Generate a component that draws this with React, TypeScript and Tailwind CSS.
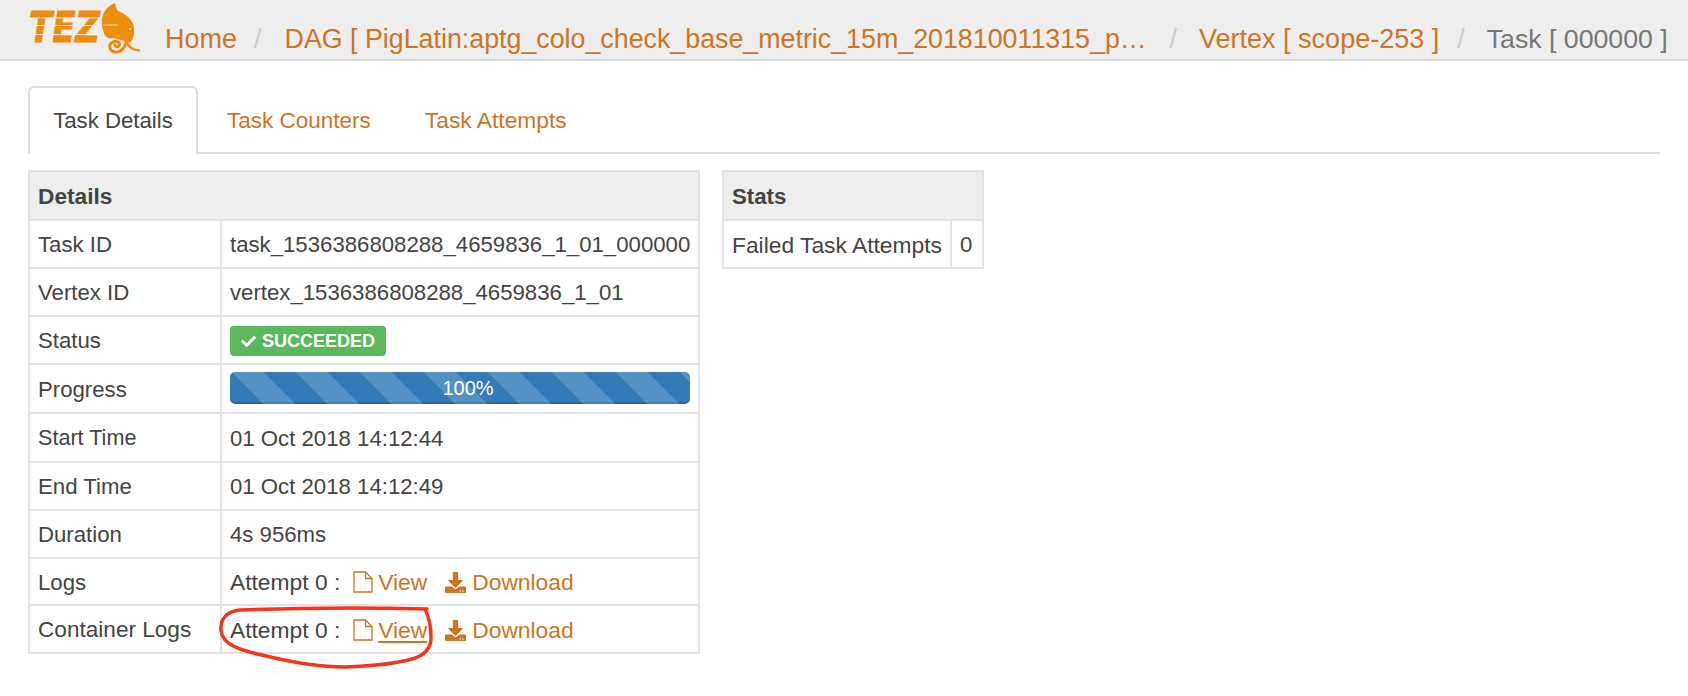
import type { ReactNode } from "react";
import { FaCheck, FaDownload } from "react-icons/fa";

function Logo() {
  return (
    <svg width="115" height="56" viewBox="0 0 115 56" className="shrink-0" aria-hidden="true">
      <text
        x="1"
        y="42"
        textLength="71"
        lengthAdjust="spacingAndGlyphs"
        fontFamily="'DejaVu Sans', sans-serif"
        fontWeight="700"
        fontStyle="italic"
        fontSize="43"
        fill="#ee8c0e"
        stroke="#ee8c0e"
        strokeWidth="1"
      >
        TEZ
      </text>
      <path d="M0 18H72M0 25.5H72M0 34.5H72" stroke="#eeeeee" strokeWidth="0.9" />
      <path
        d="M87 3C88 7 88 9 90 11C96 13 103 18 105.5 25C107 32 106 38 102 43L97 41L85 38C80 39 77 37 76 33C74 28 73 22 74.5 17C76 10 81 5 87 3Z"
        fill="#ee8c0e"
      />
      <path
        d="M98 40C98 48 92 53 87 52C81 51 80 44 85 42C89 40 93 43 91 46C89 47.5 87 46.5 87 45"
        fill="none"
        stroke="#ee8c0e"
        strokeWidth="3"
        strokeLinecap="round"
      />
      <path d="M99 43C101 47 105 50 111 50.5" fill="none" stroke="#ee8c0e" strokeWidth="2.4" strokeLinecap="round" />
      <path d="M75 25H90" stroke="#eeeeee" strokeWidth="0.8" />
      <circle cx="102" cy="29" r="0.9" fill="#eeeeee" />
    </svg>
  );
}

function FileIcon() {
  return (
    <svg width="20" height="22" viewBox="0 0 20 22" className="inline-block align-[-3px]" aria-hidden="true">
      <path d="M1 1H12.5L19 7.5V21H1ZM12.5 1V7.5H19" fill="none" stroke="currentColor" strokeWidth="1.3" />
    </svg>
  );
}

function LogLinks({ active }: { active?: boolean }) {
  return (
    <span className="text-[22.8px]">
      Attempt 0 :
      <span className="ml-[13px] text-[#d0741f]">
        <FileIcon />
        <span className={active ? "pl-[5px] underline decoration-2 underline-offset-[3px]" : "pl-[5px]"}>View</span>
      </span>
      <span className="ml-[18px] text-[#d0741f]">
        <FaDownload className="mr-[6px] inline-block size-[21px] align-[-3px]" />
        Download
      </span>
    </span>
  );
}

const rows: { label: string; labelClass?: string; h: string; value: ReactNode }[] = [
  { label: "Task ID", h: "h-[48px]", value: "task_1536386808288_4659836_1_01_000000" },
  { label: "Vertex ID", h: "h-[48px]", value: "vertex_1536386808288_4659836_1_01" },
  {
    label: "Status",
    h: "h-[48px]",
    value: (
      <span className="flex h-[30px] w-[156px] items-center gap-[6px] rounded-[4px] bg-[#5cb85c] pl-[11px] text-[18px] font-bold text-white">
        <FaCheck className="size-[15px]" />
        SUCCEEDED
      </span>
    ),
  },
  {
    label: "Progress",
    h: "h-[49px]",
    value: (
      <div className="-mt-[3px] flex h-[32px] w-[460px] items-center justify-center overflow-hidden rounded-[5px] bg-[#337ab7] bg-[repeating-linear-gradient(45deg,transparent_1.4px,transparent_24px,#5590c3_24px,#5590c3_46.65px)] pl-[16px] text-[20px] font-medium text-white shadow-[inset_0_-2px_0_rgba(0,0,0,0.12)]">
        100%
      </div>
    ),
  },
  { label: "Start Time", labelClass: "text-[21.6px]", h: "h-[49px]", value: "01 Oct 2018 14:12:44" },
  { label: "End Time", h: "h-[48px]", value: "01 Oct 2018 14:12:49" },
  { label: "Duration", h: "h-[48px]", value: "4s 956ms" },
  { label: "Logs", h: "h-[47px]", value: <LogLinks /> },
  { label: "Container Logs", labelClass: "text-[22.6px]", h: "h-[48px]", value: <LogLinks active /> },
];

const cell = "border-2 border-[#e4e4e4] px-[8px] pb-0 pt-[2px]";

export default function App() {
  return (
    <div className="relative h-[696px] w-[1688px] overflow-hidden bg-white font-['Liberation_Sans',Arial,sans-serif] text-[22.2px] text-[#444444]">
      <header className="flex h-[61px] items-start border-b-2 border-[#dddddd] bg-[#eeeeee] pl-[28px]">
        <Logo />
        <nav className="ml-[22px] flex min-w-0 items-baseline pt-[21px] text-[27px] leading-[36px] text-[#d0741f]">
          <a>Home</a>
          <span className="pl-[17px] pr-[23px] text-[#cccccc]">/</span>
          <a className="w-[865px] truncate text-[26.8px]">DAG [ PigLatin:aptg_colo_check_base_metric_15m_201810011315_pig_script ]</a>
          <span className="pl-[20px] pr-[22px] text-[#cccccc]">/</span>
          <a className="whitespace-nowrap">Vertex [ scope-253 ]</a>
          <span className="pl-[18px] pr-[22px] text-[#cccccc]">/</span>
          <span className="whitespace-nowrap text-[26.7px] text-[#777777]">Task [ 000000 ]</span>
        </nav>
      </header>

      <main className="px-[28px] pt-[25px]">
        <ul className="flex h-[68px] items-stretch border-b-2 border-[#dddddd]">
          <li className="-mb-[2px] flex w-[170px] items-center justify-center rounded-t-[6px] border-2 border-b-0 border-[#dddddd] bg-white">
            Task Details
          </li>
          <li className="flex items-center pl-[29px] pr-[27px] pt-[3px] text-[22.5px] text-[#d0741f]">Task Counters</li>
          <li className="flex items-center px-[27px] pt-[3px] text-[22.8px] text-[#d0741f]">Task Attempts</li>
        </ul>

        <div className="mt-[16px] flex items-start gap-[22px]">
          <table className="w-[672px] table-fixed">
            <colgroup>
              <col className="w-[192px]" />
              <col />
            </colgroup>
            <thead>
              <tr className="h-[49px] bg-[#eeeeee]">
                <th colSpan={2} className={`${cell} text-left text-[22.7px] font-bold`}>
                  Details
                </th>
              </tr>
            </thead>
            <tbody>
              {rows.map((row) => (
                <tr key={row.label} className={row.h}>
                  <td className={`${cell} ${row.labelClass ?? ""}`}>{row.label}</td>
                  <td className={`${cell} whitespace-nowrap`}>{row.value}</td>
                </tr>
              ))}
            </tbody>
          </table>

          <table className="w-[262px] table-fixed">
            <colgroup>
              <col className="w-[228px]" />
              <col />
            </colgroup>
            <thead>
              <tr className="h-[49px] bg-[#eeeeee]">
                <th colSpan={2} className={`${cell} text-left font-bold`}>
                  Stats
                </th>
              </tr>
            </thead>
            <tbody>
              <tr className="h-[48px]">
                <td className={`${cell} whitespace-nowrap text-[22.8px]`}>Failed Task Attempts</td>
                <td className={cell}>0</td>
              </tr>
            </tbody>
          </table>
        </div>
      </main>

      {/* red hand drawn annotation */}
      <svg className="pointer-events-none absolute left-0 top-0" width="1688" height="696" aria-hidden="true">
        <path
          d="M427 609C390 608 320 607 240 610C226 611 220 620 221 631C223 645 240 650 262 655C290 662 320 667 345 667C370 666 395 664 412 659C426 655 431 648 431 638C431 628 429 617 425 609"
          fill="none"
          stroke="#f5351c"
          strokeWidth="3.5"
          strokeLinecap="round"
        />
      </svg>
    </div>
  );
}
